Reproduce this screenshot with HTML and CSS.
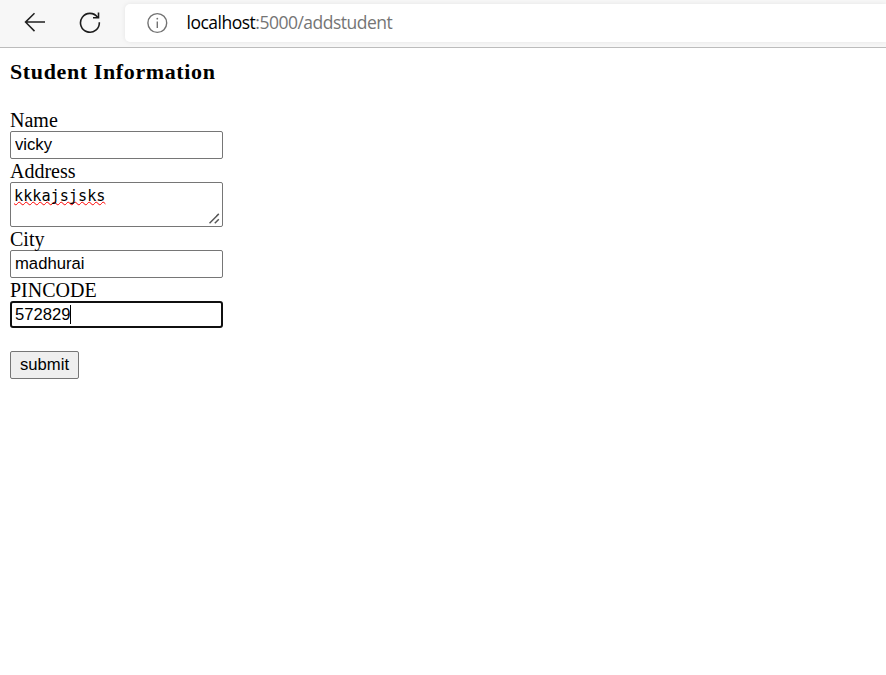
FILE: index.html
```html
<!DOCTYPE html>
<html lang="en">
<head>
<meta charset="utf-8">
<title>Student Information</title>
<link rel="stylesheet" href="styles.css">
</head>
<body>
<header class="toolbar">
  <svg class="back" width="22" height="20" viewBox="0 0 22 20" fill="none" stroke="#202020" stroke-width="1.5"><path d="M10.5 1.2 1.5 10.1l9 9M1.5 10.1H21"/></svg>
  <svg class="reload" width="22" height="22" viewBox="0 0 22 22" fill="none" stroke="#1c1c1c" stroke-width="1.6"><path d="M20.3 10.2A9.4 9.4 0 1 1 18.6 5.4M19.5 .6V5.8H14"/></svg>
  <div class="address-bar">
    <svg class="info" width="22" height="22" viewBox="0 0 22 22" fill="none" stroke="#727272" stroke-width="1.4"><circle cx="11.3" cy="11" r="9.4"/><path d="M11.3 9.5V16"/><circle cx="11.3" cy="6.7" r=".9" fill="#727272" stroke="none"/></svg>
    <span class="url"><span class="host">localhost</span>:5000/addstudent</span>
  </div>
</header>
<main>
  <h3>Student Information</h3>
  <form>
    <label for="name">Name</label>
    <input id="name" type="text" value="vicky">
    <label>Address</label>
    <div class="textarea" role="textbox" aria-label="Address"><span class="misspelled">kkkajsjsks</span>
      <svg class="grip" width="11" height="11" viewBox="0 0 11 11" stroke="#555" stroke-width="1.5"><path d="M.5 10.2 9.8 .9M5.8 10.2l4-4"/></svg>
    </div>
    <label for="city">City</label>
    <input id="city" type="text" value="madhurai">
    <label for="pincode">PINCODE</label>
    <div class="focused"><input id="pincode" type="text" value="572829"><i class="caret"></i></div>
    <button type="button">submit</button>
  </form>
</main>
</body>
</html>
```
FILE: styles.css
```css
* { box-sizing: border-box; }
body {
  margin: 0;
  background: #fff;
  color: #000;
  font: 20px/23px "Liberation Serif", serif;
}
.toolbar {
  display: flex;
  align-items: flex-start;
  height: 48px;
  background: #f7f7f7;
  border-bottom: 1px solid #bcbcbc;
  overflow: hidden;
}
.back { flex: none; margin: 12px 0 0 24px; }
.reload { flex: none; margin: 12px 0 0 33px; }
.address-bar {
  display: flex;
  align-items: center;
  flex: 1;
  height: 38px;
  margin: 4px 0 0 24px;
  padding-left: 21px;
  background: #fff;
  border-radius: 5px 0 0 5px;
  box-shadow: 0 0 5px rgba(0, 0, 0, .08);
}
.url {
  margin: -2px 0 0 18.5px;
  color: #757575;
  font: 17.5px/24px "Open Sans", sans-serif;
  letter-spacing: -.5px;
}
.host { color: #000; }
main { padding: 12px 10px; }
h3 {
  margin: 0 0 24px;
  font-size: 22px;
  line-height: 24px;
  letter-spacing: .62px;
}
form { width: 213px; }
label {
  display: block;
  height: 23px;
  line-height: 25px;
}
input {
  display: block;
  width: 213px;
  height: 28px;
  margin: 0;
  padding: 0 4px;
  border: 1px solid #767676;
  border-radius: 2px;
  background: #fff;
  color: #000;
  font: 16.67px "Liberation Sans", sans-serif;
  outline: none;
}
.textarea {
  position: relative;
  height: 45px;
  padding: 3px;
  border: 1px solid #767676;
  border-radius: 2px;
  font: 15.2px/20px "DejaVu Sans Mono", monospace;
}
.misspelled {
  text-decoration: underline wavy #f00 1.3px;
  text-underline-offset: 0;
  text-decoration-skip-ink: none;
}
.grip { position: absolute; right: 2px; bottom: 2px; }
.focused { position: relative; }
.focused input {
  height: 27px;
  padding: 0 3px;
  border: 2px solid #101010;
  border-radius: 3px;
}
.caret {
  position: absolute;
  top: 4px;
  left: 60px;
  width: 1px;
  height: 19px;
  background: #000;
}
button {
  display: block;
  width: 69px;
  height: 28px;
  margin: 23px 0 0;
  padding: 0;
  border: 1px solid #767676;
  border-radius: 2px;
  background: #efefef;
  color: #000;
  font: 16.67px "Liberation Sans", sans-serif;
}
```
